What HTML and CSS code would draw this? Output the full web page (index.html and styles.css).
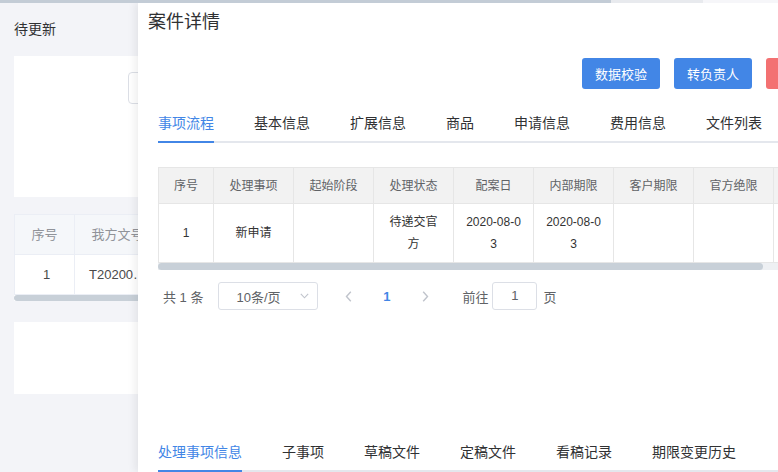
FILE: index.html
```html
<!DOCTYPE html>
<html lang="zh-CN">
<head>
<meta charset="utf-8">
<title>案件详情</title>
<link rel="stylesheet" href="styles.css">
</head>
<body>
<div class="topbar"><div class="topbar-thumb"></div><div class="topbar-track"></div></div>

<main class="page">
  <h2 class="page-title">待更新</h2>
  <section class="card card-filter"><div class="fake-input"></div></section>
  <div class="list-table">
    <div class="lt-grid">
      <div class="lt-th">序号</div>
      <div class="lt-th">我方文号</div>
      <div class="lt-th">案件名称</div>
      <div class="lt-th">客户</div>
      <div class="lt-th">状态</div>
      <div class="lt-th">操作</div>
      <div class="lt-td">1</div>
      <div class="lt-td">T2020080300012</div>
      <div class="lt-td"></div>
      <div class="lt-td"></div>
      <div class="lt-td"></div>
      <div class="lt-td"></div>
    </div>
    <div class="lt-scroll"></div>
  </div>
  <section class="card card-bottom"></section>
</main>

<aside class="drawer">
  <h1 class="drawer-title">案件详情</h1>
  <div class="drawer-body">
    <div class="actions">
      <button class="btn">数据校验</button>
      <button class="btn">转负责人</button>
      <button class="btn btn-danger">删除案件</button>
    </div>

    <nav class="tabs-nav">
      <div class="tab active">事项流程</div>
      <div class="tab">基本信息</div>
      <div class="tab">扩展信息</div>
      <div class="tab">商品</div>
      <div class="tab">申请信息</div>
      <div class="tab">费用信息</div>
      <div class="tab">文件列表</div>
    </nav>

    <div class="dt-wrap">
      <div class="dt">
        <div class="dt-th">序号</div>
        <div class="dt-th">处理事项</div>
        <div class="dt-th">起始阶段</div>
        <div class="dt-th">处理状态</div>
        <div class="dt-th">配案日</div>
        <div class="dt-th">内部期限</div>
        <div class="dt-th">客户期限</div>
        <div class="dt-th">官方绝限</div>
        <div class="dt-th">操作</div>
        <div class="dt-td">1</div>
        <div class="dt-td">新申请</div>
        <div class="dt-td"></div>
        <div class="dt-td">待递交官方</div>
        <div class="dt-td">2020-08-03</div>
        <div class="dt-td">2020-08-03</div>
        <div class="dt-td"></div>
        <div class="dt-td"></div>
        <div class="dt-td"></div>
      </div>
      <div class="dt-scroll"><div class="dt-thumb"></div></div>
    </div>

    <div class="pager">
      <span class="pager-total">共 1 条</span>
      <div class="pager-size">
        <span>10条/页</span>
        <svg class="ico-down" width="9" height="6" viewBox="0 0 9 6"><path d="M0.8 0.8 L4.5 4.8 L8.2 0.8" fill="none" stroke="#c0c4cc" stroke-width="1.1"/></svg>
      </div>
      <span class="pager-btn pager-prev"><svg width="7" height="11" viewBox="0 0 7 11"><path d="M5.8 0.8 L1.5 5.5 L5.8 10.2" fill="none" stroke="#c0c4cc" stroke-width="1.4"/></svg></span>
      <span class="pager-num">1</span>
      <span class="pager-btn"><svg width="7" height="11" viewBox="0 0 7 11"><path d="M1.2 0.8 L5.5 5.5 L1.2 10.2" fill="none" stroke="#c0c4cc" stroke-width="1.4"/></svg></span>
      <span class="pager-jump">前往</span>
      <div class="pager-input">1</div>
      <span class="pager-unit">页</span>
    </div>

    <nav class="tabs-nav tabs-sub">
      <div class="tab active">处理事项信息</div>
      <div class="tab">子事项</div>
      <div class="tab">草稿文件</div>
      <div class="tab">定稿文件</div>
      <div class="tab">看稿记录</div>
      <div class="tab">期限变更历史</div>
    </nav>
  </div>
</aside>
</body>
</html>
```

FILE: styles.css
```css
html, body {
  margin: 0;
  padding: 0;
}
body {
  width: 778px;
  height: 472px;
  overflow: hidden;
  position: relative;
  background: #f3f4f8;
  font-family: "Liberation Sans", "Noto Sans CJK SC", sans-serif;
  color: #303133;
}

/* top scrollbar strip */
.topbar {
  position: absolute;
  top: 0;
  left: 0;
  right: 0;
  height: 3px;
  display: flex;
  background: #f6f6f9;
  z-index: 5;
}
.topbar-thumb { width: 611px; background: #c3ccd6; }
.topbar-track { width: 92px; background: #e8eaee; }

/* background page */
.page {
  padding: 18px 14px 0;
}
.page-title {
  margin: 0;
  font-size: 14px;
  font-weight: normal;
  line-height: 22px;
  color: #303133;
}
.card { background: #fff; }
.card-filter {
  margin-top: 16px;
  height: 141px;
  box-sizing: border-box;
  padding: 16px 0 0 114px;
}
.fake-input {
  width: 300px;
  height: 32px;
  box-sizing: border-box;
  border: 1px solid #dcdfe6;
  border-radius: 4px;
}
.list-table {
  margin-top: 17px;
  background: #fff;
}
.lt-grid {
  display: grid;
  grid-template-columns: 60px 86px 140px 120px 120px 120px;
  border-top: 1px solid #ebeef5;
  border-left: 1px solid #ebeef5;
}
.lt-th, .lt-td {
  height: 40px;
  box-sizing: border-box;
  border-right: 1px solid #ebeef5;
  border-bottom: 1px solid #ebeef5;
  font-size: 13px;
  line-height: 39px;
  text-align: center;
  padding: 0 14px;
  white-space: nowrap;
  overflow: hidden;
  text-overflow: ellipsis;
}
.lt-th { background: #f5f7fa; color: #909399; }
.lt-td { background: #fff; color: #4a4a4a; padding: 0 10px 0 14px; }
.lt-scroll {
  height: 6px;
  background: #c8d0d8;
  border-radius: 3px;
}
.card-bottom {
  margin-top: 21px;
  height: 72px;
}

/* drawer */
.drawer {
  position: absolute;
  top: 3px;
  left: 138px;
  bottom: 0;
  width: 726px;
  background: #fff;
  box-shadow: -3px 0 8px rgba(0, 0, 0, 0.07);
  z-index: 2;
}
.drawer-title {
  margin: 0;
  padding: 7px 0 0 10px;
  font-size: 18px;
  font-weight: normal;
  line-height: 24px;
  color: #303133;
}
.drawer-body {
  padding: 0 20px;
}
.actions {
  display: flex;
  justify-content: flex-end;
  gap: 14px;
  margin-top: 24px;
}
.btn {
  width: 78px;
  height: 31px;
  padding: 0;
  border: none;
  border-radius: 3px;
  background: #4286e6;
  color: #fff;
  font-family: inherit;
  font-size: 13px;
  flex: none;
}
.btn-danger { background: #f37172; }

/* tabs */
.tabs-nav {
  display: flex;
  height: 40px;
  position: relative;
  margin-top: 14px;
  overflow: hidden;
  white-space: nowrap;
}
.tabs-nav::after {
  content: "";
  position: absolute;
  left: 0;
  right: 0;
  bottom: 0;
  height: 2px;
  background: #e4e7ed;
}
.tab {
  position: relative;
  flex: none;
  padding: 0 20px;
  font-size: 14px;
  line-height: 40px;
  color: #303133;
}
.tab:first-child { padding-left: 0; }
.tab.active { color: #4286e6; }
.tab.active::after {
  content: "";
  position: absolute;
  left: 20px;
  right: 20px;
  bottom: 0;
  height: 2px;
  background: #4286e6;
  z-index: 1;
}
.tab:first-child.active::after { left: 0; }
.tabs-sub { margin-top: 122px; }

/* detail table */
.dt-wrap {
  margin-top: 24px;
  overflow: hidden;
}
.dt {
  display: grid;
  grid-template-columns: 55px repeat(8, 80px);
  width: max-content;
  border-top: 1px solid #e6e6e6;
  border-left: 1px solid #e6e6e6;
}
.dt-th, .dt-td {
  box-sizing: border-box;
  border-right: 1px solid #e6e6e6;
  border-bottom: 1px solid #e6e6e6;
  display: flex;
  align-items: center;
  justify-content: center;
  text-align: center;
  font-size: 12px;
  padding: 0 10px;
  word-break: break-all;
}
.dt-th {
  height: 36px;
  background: #f2f2f2;
  color: #606266;
  line-height: 20px;
}
.dt-td {
  height: 59px;
  line-height: 22px;
  color: #333;
}
.dt-scroll {
  height: 7px;
  background: #eef0f3;
}
.dt-thumb {
  width: 605px;
  height: 7px;
  border-radius: 4px;
  background: #c8d0d8;
}

/* pagination */
.pager {
  display: flex;
  align-items: center;
  height: 28px;
  margin-top: 12px;
  font-size: 13px;
  color: #606266;
}
.pager-total {
  margin-left: 5px;
  margin-right: 15px;
  white-space: pre;
}
.pager-size {
  width: 100px;
  height: 28px;
  box-sizing: border-box;
  border: 1px solid #dcdfe6;
  border-radius: 3px;
  display: flex;
  align-items: center;
  justify-content: space-between;
  padding: 0 8px 0 17px;
  color: #606266;
}
.ico-down { display: block; }
.pager-btn {
  width: 38px;
  height: 28px;
  display: flex;
  align-items: center;
  justify-content: center;
}
.pager-prev { margin-left: 11px; }
.pager-num {
  width: 39px;
  text-align: center;
  color: #4286e6;
  font-weight: bold;
}
.pager-jump { margin-left: 18px; }
.pager-input {
  width: 45px;
  height: 28px;
  box-sizing: border-box;
  margin-left: 4px;
  border: 1px solid #dcdfe6;
  border-radius: 3px;
  text-align: center;
  line-height: 26px;
  color: #606266;
}
.pager-unit { margin-left: 6px; }
```
